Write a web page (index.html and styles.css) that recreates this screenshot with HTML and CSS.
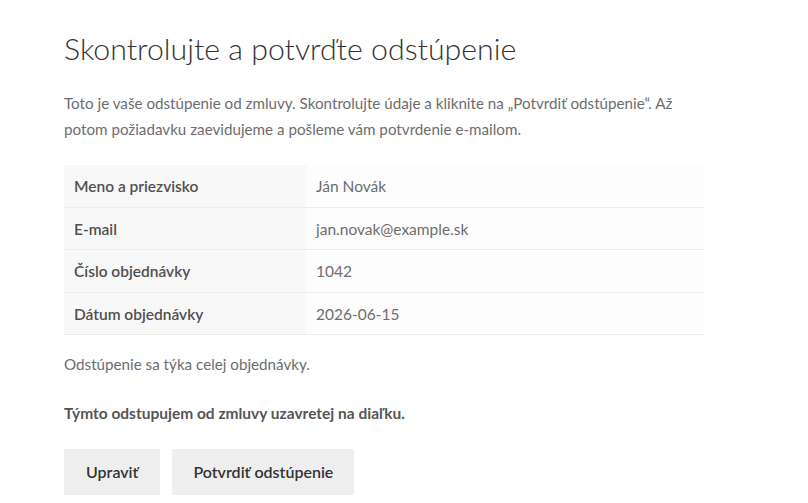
FILE: index.html
```html
<!DOCTYPE html>
<html lang="sk">
<head>
<meta charset="utf-8">
<title>Skontrolujte a potvrďte odstúpenie</title>
<link rel="stylesheet" href="styles.css">
</head>
<body>
<main class="page">
  <h1 class="title">Skontrolujte a potvrďte odstúpenie</h1>
  <p class="text">Toto je vaše odstúpenie od zmluvy. Skontrolujte údaje a kliknite na „Potvrdiť odstúpenie“. Až potom požiadavku zaevidujeme a pošleme vám potvrdenie e-mailom.</p>
  <table class="summary">
    <tbody>
      <tr><th>Meno a priezvisko</th><td>Ján Novák</td></tr>
      <tr><th>E-mail</th><td>jan.novak@example.sk</td></tr>
      <tr><th>Číslo objednávky</th><td>1042</td></tr>
      <tr><th>Dátum objednávky</th><td>2026-06-15</td></tr>
    </tbody>
  </table>
  <p class="text note">Odstúpenie sa týka celej objednávky.</p>
  <p class="text"><strong class="statement">Týmto odstupujem od zmluvy uzavretej na diaľku.</strong></p>
  <div class="actions">
    <button class="btn" type="button">Upraviť</button>
    <button class="btn" type="button">Potvrdiť odstúpenie</button>
  </div>
</main>
</body>
</html>
```
FILE: styles.css
```css
html, body {
  margin: 0;
  padding: 0;
  background: #ffffff;
}
body {
  font-family: "Lato", "Noto Sans", sans-serif;
  font-size: 15.2px;
  line-height: 26px;
  color: #6d6d6d;
}
.page {
  width: 640px;
  padding: 30px 0 0 64px;
}
.title {
  margin: 0 0 24px;
  font-size: 30.3px;
  line-height: 36px;
  font-weight: 300;
  color: #333333;
}
.text {
  margin: 0 0 23px;
}
.summary {
  width: 640px;
  border-collapse: collapse;
  border-spacing: 0;
  margin: 0 0 16px;
  font-size: 15.5px;
}
.summary th,
.summary td {
  text-align: left;
  vertical-align: middle;
  padding: 8px 10px 7.5px;
  border-bottom: 1px solid #ececec;
}
.summary th {
  width: 222px;
  background: #f8f8f8;
  font-weight: 600;
  color: #505050;
}
.summary td {
  background: #fdfdfd;
  font-weight: 400;
}
.statement {
  font-size: 15.5px;
  font-weight: 700;
  color: #555555;
}
.actions {
  display: flex;
  gap: 12px;
}
.btn {
  font-family: inherit;
  font-size: 16px;
  line-height: 26px;
  font-weight: 600;
  color: #333333;
  background: #eeeeee;
  border: 0;
  border-radius: 0;
  padding: 10px 22px;
  cursor: pointer;
}
.btn + .btn {
  padding: 10px 21px;
}
```
